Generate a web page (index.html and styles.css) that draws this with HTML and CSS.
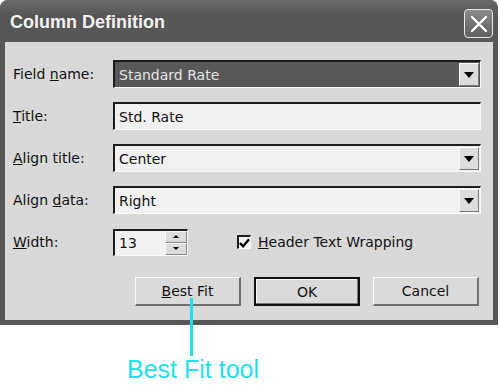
FILE: index.html
```html
<!DOCTYPE html>
<html lang="en">
<head>
    <meta charset="UTF-8">
    <title>Column Definition</title>
    <link rel="stylesheet" href="styles.css">
</head>
<body>
    <div class="window">
        <div class="titlebar">
            <span class="title">Column Definition</span>
            <span class="close">
                <svg width="20" height="20" viewBox="0 0 20 20"><path d="M3 3 L17 17 M17 3 L3 17" stroke="#fff" stroke-width="2.4" stroke-linecap="round"/></svg>
            </span>
        </div>
        <div class="panel">
            <div class="row">
                <label>Field <u>n</u>ame:</label>
                <div class="box combo selected">
                    <span class="value">Standard Rate</span>
                    <span class="drop"></span>
                </div>
            </div>
            <div class="row">
                <label><u>T</u>itle:</label>
                <div class="box"><span class="value">Std. Rate</span></div>
            </div>
            <div class="row">
                <label><u>A</u>lign title:</label>
                <div class="box combo">
                    <span class="value">Center</span>
                    <span class="drop"></span>
                </div>
            </div>
            <div class="row">
                <label>Align <u>d</u>ata:</label>
                <div class="box combo">
                    <span class="value">Right</span>
                    <span class="drop"></span>
                </div>
            </div>
            <div class="row">
                <label><u>W</u>idth:</label>
                <div class="width-line">
                    <div class="box spin">
                        <span class="value">13</span>
                        <span class="arrows">
                            <span class="up"></span>
                            <span class="down"></span>
                        </span>
                    </div>
                    <span class="check">
                        <svg width="12" height="10" viewBox="0 0 12 10"><path d="M1 5 L4.5 8.5 L11 1" stroke="#000" stroke-width="2.6" fill="none"/></svg>
                    </span>
                    <span class="check-label"><u>H</u>eader Text Wrapping</span>
                </div>
            </div>
            <div class="buttons">
                <button class="btn"><u>B</u>est Fit</button>
                <button class="btn default">OK</button>
                <button class="btn">Cancel</button>
            </div>
        </div>
        <span class="pointer"></span>
    </div>
    <div class="callout">Best Fit tool</div>
</body>
</html>
```

FILE: styles.css
```css
body {
    margin: 0;
    background: #fff;
    font-family: "DejaVu Sans", sans-serif;
    width: 500px;
    height: 386px;
    overflow: hidden;
}
.window {
    position: relative;
    width: 498px;
    background: #575757;
    border-radius: 8px 8px 0 0;
    padding-bottom: 5px;
}
.titlebar {
    height: 42px;
    display: flex;
    align-items: center;
    justify-content: space-between;
    padding: 0 5px 0 10px;
    background: linear-gradient(180deg, #6a6a6a, #555 40%, #585858);
    border-radius: 8px 8px 0 0;
}
.title {
    font-family: "Liberation Sans", Arial, sans-serif;
    font-weight: bold;
    font-size: 18px;
    color: #f2f2f2;
    margin-top: 2px;
}
.close {
    width: 27px;
    height: 27px;
    border: 1px solid #e8e8e8;
    border-radius: 4px;
    background: linear-gradient(180deg, #8a8a8a, #5e5e5e);
    display: flex;
    align-items: center;
    justify-content: center;
    margin-top: 5px;
}
.panel {
    background: #d9d9d9;
    margin: 0 5px;
    padding: 18px 12px 14px 8px;
    font-family: "DejaVu Sans", sans-serif;
    font-size: 14px;
    color: #111;
}
.row {
    display: flex;
    align-items: center;
    height: 28px;
    margin-bottom: 14px;
}
.row label {
    width: 100px;
    flex: none;
}
.box {
    flex: 1;
    height: 28px;
    box-sizing: border-box;
    background: #f1f1f1;
    border-top: 2px solid #1c1c1c;
    border-left: 2px solid #1c1c1c;
    border-right: 1px solid #fafafa;
    border-bottom: 1px solid #fafafa;
    display: flex;
    align-items: center;
}
.value {
    flex: 1;
    padding-left: 4px;
}
.selected {
    background: #585858;
}
.selected .value {
    color: #e4e4e4;
}
.drop {
    width: 20px;
    height: 23px;
    box-sizing: border-box;
    background: #dcdcdc;
    border-top: 1px solid #fafafa;
    border-left: 1px solid #fafafa;
    border-right: 1px solid #7a7a7a;
    border-bottom: 1px solid #7a7a7a;
    display: flex;
    align-items: center;
    justify-content: center;
    margin-right: 1px;
}
.drop::after {
    content: "";
    border-left: 5px solid transparent;
    border-right: 5px solid transparent;
    border-top: 6px solid #000;
}
.width-line {
    flex: 1;
    display: flex;
    align-items: center;
}
.spin {
    flex: none;
    width: 75px;
    height: 27px;
}
.arrows {
    width: 22px;
    height: 24px;
    display: flex;
    flex-direction: column;
}
.up, .down {
    flex: 1;
    background: #dcdcdc;
    border-top: 1px solid #fafafa;
    border-left: 1px solid #fafafa;
    border-bottom: 1px solid #8a8a8a;
    border-right: 1px solid #8a8a8a;
    display: flex;
    align-items: center;
    justify-content: center;
}
.up::after {
    content: "";
    border-left: 3px solid transparent;
    border-right: 3px solid transparent;
    border-bottom: 3px solid #000;
}
.down::after {
    content: "";
    border-left: 3px solid transparent;
    border-right: 3px solid transparent;
    border-top: 3px solid #000;
}
.check {
    width: 14px;
    height: 14px;
    box-sizing: border-box;
    margin-left: 49px;
    background: #f2f2f2;
    border-top: 2px solid #1c1c1c;
    border-left: 2px solid #1c1c1c;
    border-right: 1px solid #fafafa;
    border-bottom: 1px solid #fafafa;
    display: flex;
    align-items: center;
    justify-content: center;
}
.check-label {
    margin-left: 7px;
}
.buttons {
    display: flex;
    justify-content: flex-end;
    gap: 13px;
    margin-top: 21px;
    padding-right: 2px;
}
.btn {
    width: 106px;
    height: 29px;
    font-family: "DejaVu Sans", sans-serif;
    font-size: 14px;
    color: #111;
    background: #dadada;
    border-top: 1px solid #fafafa;
    border-left: 1px solid #fafafa;
    border-right: 2px solid #6e6e6e;
    border-bottom: 2px solid #6e6e6e;
    padding: 0;
}
.btn.default {
    border: 2px solid #111;
    box-shadow: inset -1px -1px 0 #777, inset 1px 1px 0 #fafafa;
}
.pointer {
    position: absolute;
    left: 190px;
    top: 298px;
    width: 3px;
    height: 58px;
    background: #1fe0ea;
}
.callout {
    margin: 30px 0 0 127px;
    font-family: "Liberation Sans", Arial, sans-serif;
    font-size: 25px;
    color: #1fe0ea;
}
```
